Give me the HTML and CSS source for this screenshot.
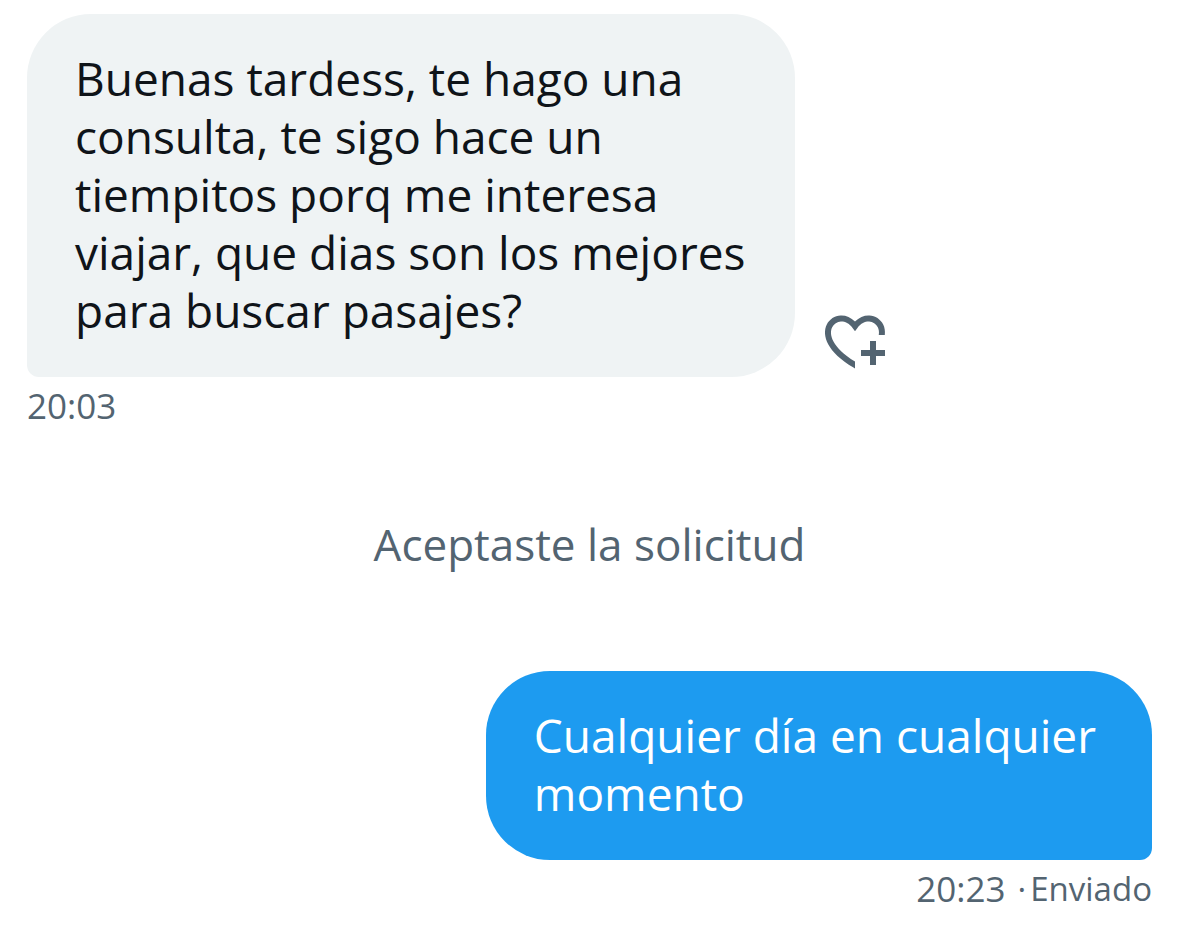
FILE: index.html
```html
<!DOCTYPE html>
<html lang="es">
<head>
<meta charset="utf-8">
<meta name="viewport" content="width=device-width, initial-scale=1">
<title>Mensajes</title>
<link rel="stylesheet" href="styles.css">
</head>
<body>
<main class="chat">
  <article class="message message-in">
    <div class="message-row">
      <p class="bubble bubble-in">Buenas tardess, te hago una<br>consulta, te sigo hace un<br>tiempitos porq me interesa<br>viajar, que dias son los mejores<br>para buscar pasajes?</p>
      <button class="react" type="button" aria-label="Reaccionar">
        <svg class="react-icon" viewBox="0 0 24 24" aria-hidden="true"><path d="M17 12v3h-2.998v2h3v3h2v-3h3v-2h-3.001v-3H17zm-5 6.839c-3.871-2.34-6.053-4.639-7.127-6.609-1.112-2.04-1.031-3.7-.479-4.82.561-1.13 1.667-1.84 2.91-1.91 1.222-.06 2.68.51 3.892 2.16l.806 1.09.805-1.09c1.211-1.65 2.668-2.22 3.89-2.16 1.242.07 2.347.78 2.908 1.91.334.677.49 1.554.321 2.59h2.011c.153-1.283-.039-2.469-.539-3.48-.887-1.79-2.647-2.91-4.601-3.01-1.65-.09-3.367.56-4.796 2.01-1.43-1.45-3.147-2.1-4.798-2.01-1.954.1-3.714 1.22-4.601 3.01-.896 1.81-.846 4.17.514 6.67 1.353 2.48 4.003 5.12 8.382 7.67l.502.299v-2.32z"/></svg>
      </button>
    </div>
    <div class="meta"><time class="time">20:03</time></div>
  </article>
  <p class="notice">Aceptaste la solicitud</p>
  <article class="message message-out">
    <p class="bubble bubble-out">Cualquier día en cualquier<br>momento</p>
    <div class="meta"><time class="time">20:23</time><span class="status"><span>·</span><span>Enviado</span></span></div>
  </article>
</main>
</body>
</html>
```
FILE: styles.css
```css
* {
  box-sizing: border-box;
}

body {
  margin: 0;
  background: #fff;
  font-family: "Open Sans", "Noto Sans", sans-serif;
}

.chat {
  display: flex;
  flex-direction: column;
  padding: 14px 27px 24px;
}

.message {
  display: flex;
  flex-direction: column;
}

.message-in {
  align-items: flex-start;
}

.message-out {
  align-items: flex-end;
}

.message-row {
  display: flex;
  align-items: flex-end;
  gap: 24px;
}

.bubble {
  margin: 0;
  padding: 35px 50px 38px 48px;
  border-radius: 64px;
  font-size: 46px;
  line-height: 58px;
}

.bubble-in {
  border-bottom-left-radius: 12px;
  background: #eff3f4;
  color: #0f1419;
}

.bubble-out {
  padding-right: 56px;
  border-bottom-right-radius: 12px;
  background: #1d9bf0;
  color: #fff;
}

.react {
  flex: none;
  padding: 0;
  border: 0;
  background: none;
  color: #536471;
  cursor: pointer;
}

.react-icon {
  display: block;
  width: 72px;
  height: 72px;
  fill: currentColor;
}

.meta {
  display: flex;
  gap: 12px;
  padding-top: 7px;
  color: #536471;
  font-size: 33px;
  line-height: 44px;
}

.time {
  font-size: 35px;
}

.status {
  display: flex;
  gap: 4px;
}

.notice {
  margin: 88px 0 99px;
  color: #536471;
  font-size: 44px;
  line-height: 56px;
  text-align: center;
}
```
